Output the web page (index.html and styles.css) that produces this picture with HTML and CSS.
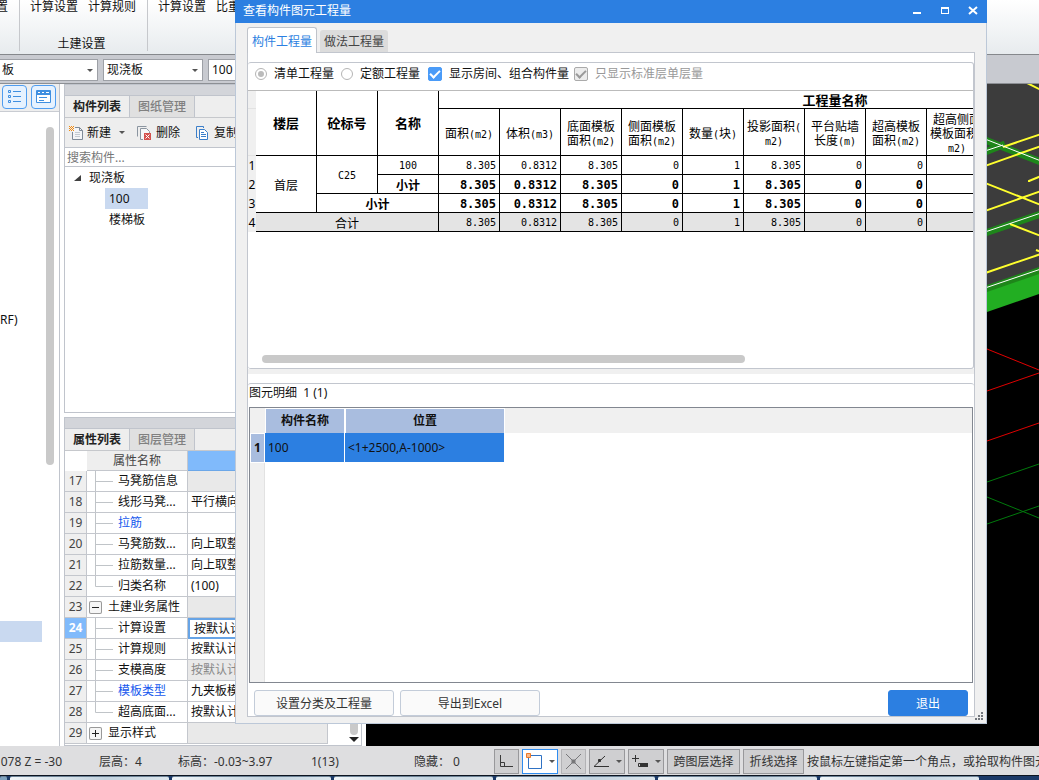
FILE: index.html
```html
<!DOCTYPE html>
<html lang="zh-CN">
<head>
<meta charset="utf-8">
<title>查看构件图元工程量</title>
<link rel="stylesheet" href="styles.css">
</head>
<body>
<div class="app">
  <header class="ribbon">
    <section class="rgroup rgroup-first"><div class="ritems"><button>设置</button></div></section>
    <section class="rgroup rgroup-civil">
      <div class="ritems"><button>计算设置</button><button>计算规则</button></div>
      <h2>土建设置</h2>
    </section>
    <section class="rgroup rgroup-last"><div class="ritems"><button>计算设置</button><button>比重设置</button></div></section>
  </header>

  <div class="combos">
    <label class="combo"><select aria-label="构件类别"><option>板</option></select></label>
    <label class="combo"><select aria-label="构件类型"><option>现浇板</option></select></label>
    <label class="combo"><select aria-label="构件"><option>100</option></select></label>
  </div>

  <main class="work">
    <aside class="nav">
      <div class="navbar">
        <button class="navbtn" aria-label="列表视图"><svg width="15" height="16" viewBox="0 0 15 16" fill="none" stroke="#3f8fe0"><path d="M1.500 1.500h2v2h-2zM1.500 6.500h2v2h-2zM1.500 11.500h2v2h-2zM6 2.500h8M6 7.500h8M6 12.500h8"/></svg></button>
        <button class="navbtn" aria-label="窗口视图"><svg width="15" height="16" viewBox="0 0 15 16"><path d="M.5 1.500h14v12H.5z" fill="#fff" stroke="#3f8fe0"/><path d="M1 1h13v5H1z" fill="#3f8fe0"/><path d="M3 8.500h8M3 11.500h5" stroke="#3f8fe0"/><path d="M2 3.500h2M6 3.500h2M10 3.500h3" stroke="#fff"/></svg></button>
      </div>
      <div class="navbody">
        <div class="navlist"><span class="navtext">RF)</span><span class="navsel"></span></div>
        <div class="navscroll"></div>
      </div>
    </aside>

    <div class="docks">
      <section class="dock dock-list">
        <div class="strip"></div>
        <div class="tabs"><button class="on">构件列表</button><button>图纸管理</button></div>
        <div class="tools">
          <button><svg width="16" height="16" viewBox="0 0 16 16" fill="none"><path d="M7 2.500h4.500l3 3v9h-10V7" fill="#f4f5f7" stroke="#7f8b98"/><path d="M11.500 2.500v3h3" stroke="#7f8b98"/><path d="M7 7.500h5M7 9.500h5M7 11.500h5" stroke="#c3cad1"/><path d="M1 1h1v1H1zM3 1h1v1H3zM5 1h1v1H5zM2 2h1v1H2zM4 2h1v1H4zM1 3h1v1H1zM3 3h1v1H3zM5 3h1v1H5zM2 4h1v1H2zM4 4h1v1H4zM1 5h1v1H1zM3 5h1v1H3zM5 5h1v1H5z" fill="#f28a10"/></svg><span>新建</span></button>
          <i class="caret"></i>
          <button class="tool-del"><svg width="16" height="16" viewBox="0 0 16 16" fill="none"><path d="M.5 11.500v-10h9" stroke="#8b95a0"/><path d="M6 14.500H3.500v-11h6l3 3V8" fill="#f6f7f8" stroke="#8b95a0"/><path d="M7 8h7v7H7z" fill="#d4504c"/><path d="m8.500 9.500 4 4m0-4-4 4" stroke="#fff"/></svg><span>删除</span></button>
          <button class="tool-copy"><svg width="16" height="16" viewBox="0 0 16 16" fill="none" stroke="#3b7ec9"><path d="M3 12.500H1.500v-11h7V3"/><path d="M4.500 4.500h5l3 3v7h-8z" fill="#fff"/><path d="M6 7.500h3M6 9.500h5M6 11.500h5"/></svg><span>复制</span></button>
        </div>
        <input class="search" type="text" placeholder="搜索构件..." aria-label="搜索构件">
        <ul class="tree">
          <li class="root"><svg width="8" height="8" viewBox="0 0 8 8"><path d="M7 1v6H0z" fill="#404040"/></svg>现浇板</li>
          <li class="leaf"><span class="picked">100</span></li>
          <li class="leaf"><span>楼梯板</span></li>
        </ul>
      </section>

      <section class="dock dock-props">
        <div class="strip"></div>
        <div class="tabs"><button class="on">属性列表</button><button>图层管理</button></div>
        <div class="propwrap">
        <table class="props">
          <colgroup><col class="pc-no"><col class="pc-name"><col class="pc-val"></colgroup>
          <thead><tr><th class="corner"></th><th>属性名称</th><th class="vhead"></th></tr></thead>
          <tbody>
            <tr><th>17</th><td><div class="nm"><svg class="br" viewBox="0 0 26 20"><path d="M8.500 0v20M8.500 10.500H26"/></svg>马凳筋信息</div></td><td class="off"></td></tr>
            <tr><th>18</th><td><div class="nm"><svg class="br" viewBox="0 0 26 20"><path d="M8.500 0v20M8.500 10.500H26"/></svg>线形马凳...</div></td><td>平行横向</td></tr>
            <tr><th>19</th><td><div class="nm link"><svg class="br" viewBox="0 0 26 20"><path d="M8.500 0v20M8.500 10.500H26"/></svg>拉筋</div></td><td></td></tr>
            <tr><th>20</th><td><div class="nm"><svg class="br" viewBox="0 0 26 20"><path d="M8.500 0v20M8.500 10.500H26"/></svg>马凳筋数...</div></td><td>向上取整+1</td></tr>
            <tr><th>21</th><td><div class="nm"><svg class="br" viewBox="0 0 26 20"><path d="M8.500 0v20M8.500 10.500H26"/></svg>拉筋数量...</div></td><td>向上取整+1</td></tr>
            <tr><th>22</th><td><div class="nm"><svg class="br" viewBox="0 0 26 20"><path d="M8.500 0v10.500H26"/></svg>归类名称</div></td><td>(100)</td></tr>
            <tr><th>23</th><td><div class="nm grp"><button class="exp" aria-label="折叠"><svg width="13" height="13" viewBox="0 0 13 13"><path d="M3 6.500h7" stroke="#222"/></svg></button>土建业务属性</div></td><td class="off"></td></tr>
            <tr class="cur"><th>24</th><td><div class="nm"><svg class="br" viewBox="0 0 26 20"><path d="M8.500 0v20M8.500 10.500H26"/></svg>计算设置</div></td><td class="edit">按默认计算设置</td></tr>
            <tr><th>25</th><td><div class="nm"><svg class="br" viewBox="0 0 26 20"><path d="M8.500 0v20M8.500 10.500H26"/></svg>计算规则</div></td><td>按默认计算规则</td></tr>
            <tr><th>26</th><td><div class="nm"><svg class="br" viewBox="0 0 26 20"><path d="M8.500 0v20M8.500 10.500H26"/></svg>支模高度</div></td><td class="off">按默认计算</td></tr>
            <tr><th>27</th><td><div class="nm link"><svg class="br" viewBox="0 0 26 20"><path d="M8.500 0v20M8.500 10.500H26"/></svg>模板类型</div></td><td>九夹板模板</td></tr>
            <tr><th>28</th><td><div class="nm"><svg class="br" viewBox="0 0 26 20"><path d="M8.500 0v10.500H26"/></svg>超高底面...</div></td><td>按默认计算</td></tr>
            <tr><th>29</th><td><div class="nm grp"><button class="exp" aria-label="展开"><svg width="13" height="13" viewBox="0 0 13 13"><path d="M3 6.500h7M6.500 3v7" stroke="#222"/></svg></button>显示样式</div></td><td class="off"></td></tr>
          </tbody>
        </table>
        <div class="pscroll"><span class="pthumb"></span><i class="caret dark"></i></div>
        </div>
      </section>
    </div>

    <section class="canvas">
      <svg width="52" height="460" viewBox="0 0 52 460" fill="none">
        <path d="M0 0h52v186L0 204z" fill="#3c3c3c"/>
        <path d="M0 204 52 185v25L0 228z" fill="#22ae22"/>
        <g stroke="#1e861a" stroke-width="7"><path d="M-2 56 54 78M-2 68 18 60M-2 149 54 130"/></g>
        <path d="M0 201 52 183v7L0 208z" fill="#1e861a"/>
        <g stroke="#ffff2e" stroke-width="2"><path d="M36-3 54 6M16 63 54 50M-2 82 54 62M42 98v-1l12-5M-2 99 54 121M-2 127 54 107M23 140l31 12M49 166l5 2M-2 189 54 170"/></g>
        <g stroke="#fff"><path d="M-2 55 54 77M-2 67 16 61M-2 148 54 129M-2 204 54 185"/></g>
        <g stroke="#e00000"><path d="M0 265 52 286M0 307 52 289M0 357 52 339"/></g>
        <g stroke="#007a0c"><path d="M0 398 52 380M0 413 52 434M0 440 52 422"/></g>
      </svg>
    </section>
  </main>

  <footer class="status">
    <span class="s-xy">X = 1078 Z = -30</span>
    <span class="s-h">层高：4</span>
    <span class="s-e">标高：-0.03~3.97</span>
    <span class="s-n">1(13)</span>
    <span class="s-hide">隐藏： 0</span>
    <div class="sbtns">
      <button class="sq" aria-label="正交"><svg width="15" height="15" viewBox="0 0 15 15" fill="none" stroke="#3a3a3a"><path d="M1.500 1v11.500H14M1.500 8.500h4v4"/></svg></button>
      <button class="dd active" aria-label="矩形"><svg width="18" height="17" viewBox="0 0 18 17" fill="none"><path d="M3.500 2.500h13v13h-13z" stroke="#2f72c4"/><path d="M1.500.5h4v4h-4z" fill="#f7b98a" stroke="#ee7a2b"/></svg><i class="caret"></i></button>
      <button class="sq dim" aria-label="交点"><svg width="17" height="17" viewBox="0 0 17 17" fill="none" stroke="#77777a"><path d="m1 1 15 15M16 1 1 16"/><path d="M7 7h3v3H7z" fill="#777"/></svg></button>
      <button class="dd" aria-label="角度"><svg width="18" height="17" viewBox="0 0 18 17" fill="none" stroke="#333"><path d="M17 13.500H2L13 3"/><path d="M6.500 6.500h2v2h-2z" fill="#333"/></svg><i class="caret"></i></button>
      <button class="dd" aria-label="偏移"><svg width="18" height="17" viewBox="0 0 18 17" fill="none" stroke="#333"><path d="M1 5.500h7M4.500 2v7"/><path d="M7.500 10.500h9v3h-9z"/><path d="M9 10h8v4H9z" fill="#333" stroke="none"/></svg><i class="caret"></i></button>
      <button class="tx tx-cross">跨图层选择</button>
      <button class="tx tx-poly">折线选择</button>
    </div>
    <span class="s-tip">按鼠标左键指定第一个角点，或拾取构件图元</span>
  </footer>
  <div class="taskbar"><i class="task-cut"></i><i></i><i></i><i></i><i></i><i></i><i></i></div>
</div>

<div class="dialog" role="dialog" aria-labelledby="dlg-title">
  <div class="titlebar">
    <h1 id="dlg-title">查看构件图元工程量</h1>
    <div class="winbtns">
      <button aria-label="最小化"><svg width="10" height="10" viewBox="0 0 10 10"><path d="M1 7h8v2H1z" fill="#fff"/></svg></button>
      <button aria-label="最大化"><svg width="10" height="10" viewBox="0 0 10 10"><path d="M1 2h8v7H1zM2 4v4h6V4z" fill="#fff" fill-rule="evenodd"/></svg></button>
      <button aria-label="关闭"><svg width="10" height="10" viewBox="0 0 10 10"><path d="m1 2 8 7M9 2 1 9" stroke="#fff" stroke-width="2"/></svg></button>
    </div>
  </div>
  <div class="dbody">
    <div class="dtabs"><button class="on">构件工程量</button><button>做法工程量</button></div>
    <div class="page">
      <div class="upper">
        <div class="opts">
          <input type="radio" name="kind" id="k1" checked disabled><label class="lb1" for="k1">清单工程量</label>
          <input type="radio" name="kind" id="k2"><label class="lb2" for="k2">定额工程量</label>
          <input type="checkbox" id="c1" checked><label class="lb3" for="c1">显示房间、组合构件量</label>
          <input type="checkbox" id="c2" checked disabled><label class="lb4" for="c2">只显示标准层单层量</label>
        </div>
        <div class="qtywrap">
          <table class="qty">
            <colgroup><col class="qn"><col span="16" class="qc"></colgroup>
            <thead>
              <tr class="h1"><th class="no"></th><th rowspan="2">楼层</th><th rowspan="2">砼标号</th><th rowspan="2">名称</th><th colspan="13">工程量名称</th></tr>
              <tr class="h2"><th class="no"></th><th>面积<span>(m2)</span></th><th>体积<span>(m3)</span></th><th>底面模板<br>面积<span>(m2)</span></th><th>侧面模板<br>面积<span>(m2)</span></th><th>数量<span>(</span>块<span>)</span></th><th>投影面积<span>(<br>m2)</span></th><th>平台贴墙<br>长度<span>(m)</span></th><th>超高模板<br>面积<span>(m2)</span></th><th>超高侧面<br>模板面积<span>(<br>m2)</span></th><th></th><th></th><th></th><th></th></tr>
            </thead>
            <tbody>
              <tr><th class="no">1</th><td class="c cn" rowspan="3">首层</td><td class="c" rowspan="2">C25</td><td class="c">100</td><td>8.305</td><td>0.8312</td><td>8.305</td><td>0</td><td>1</td><td>8.305</td><td>0</td><td>0</td><td></td><td></td><td></td><td></td><td></td></tr>
              <tr class="b"><th class="no">2</th><td class="c cn">小计</td><td>8.305</td><td>0.8312</td><td>8.305</td><td>0</td><td>1</td><td>8.305</td><td>0</td><td>0</td><td></td><td></td><td></td><td></td><td></td></tr>
              <tr class="b"><th class="no">3</th><td class="c cn" colspan="2">小计</td><td>8.305</td><td>0.8312</td><td>8.305</td><td>0</td><td>1</td><td>8.305</td><td>0</td><td>0</td><td></td><td></td><td></td><td></td><td></td></tr>
              <tr class="total"><th class="no">4</th><td class="c cn" colspan="3">合计</td><td>8.305</td><td>0.8312</td><td>8.305</td><td>0</td><td>1</td><td>8.305</td><td>0</td><td>0</td><td></td><td></td><td></td><td></td><td></td></tr>
            </tbody>
          </table>
        </div>
        <div class="hscroll"><span></span></div>
      </div>
      <div class="splitter"></div>
      <div class="lower">
        <h3>图元明细&nbsp; 1 (1)</h3>
        <div class="detailwrap">
          <table class="detail">
            <colgroup><col class="dn"><col class="d1"><col class="d2"><col></colgroup>
            <thead><tr><th class="gut"></th><th>构件名称</th><th>位置</th><th class="rest"></th></tr></thead>
            <tbody><tr><th>1</th><td>100</td><td>&lt;1+2500,A-1000&gt;</td><td class="rest"></td></tr></tbody>
          </table>
          <div class="gutter"></div>
        </div>
        <div class="actions">
          <button>设置分类及工程量</button><button>导出到Excel</button><button class="primary">退出</button>
        </div>
      </div>
    </div>
    <svg class="grip" width="8" height="8" viewBox="0 0 8 8"><path d="M6 0h2v2H6zM3 3h2v2H3zM6 3h2v2H6zM0 6h2v2H0zM3 6h2v2H3zM6 6h2v2H6z" fill="#73777d"/></svg>
  </div>
</div>
</body>
</html>
```

FILE: styles.css
```css
* { box-sizing: border-box; }
html, body { height: 100%; margin: 0; }
body {
  position: relative;
  overflow: hidden;
  font: 12px/16px "Noto Sans", "Noto Sans CJK SC", sans-serif;
  color: #111;
  background: #000;
}
button, input, select { font: inherit; color: inherit; margin: 0; }
button { border: 0; padding: 0; background: none; white-space: nowrap; }
h1, h2, h3 { margin: 0; font-size: 12px; font-weight: 400; }
svg { display: block; flex: none; }

.app { height: 100vh; display: flex; flex-direction: column; overflow: hidden; }
.caret {
  flex: none;
  width: 0;
  border: 3px solid transparent;
  border-top-color: #555;
  border-bottom: 0;
}
.caret.dark { border-width: 5px 5px 0; border-top-color: #222; }

/* Ribbon */
.ribbon {
  flex: none;
  height: 55px;
  display: flex;
  background: linear-gradient(#fff, #e7ebee);
  border-bottom: 1px solid #85888c;
}
.rgroup {
  display: flex;
  flex-direction: column;
  justify-content: space-between;
  align-items: center;
  margin-bottom: 3px;
  border-right: 1px solid #c6c8cc;
}
.rgroup-first { width: 20px; align-items: flex-end; padding-right: 11px; }
.rgroup-civil { width: 128px; padding-right: 1px; }
.rgroup-civil h2 { line-height: 14px; padding-right: 3px; }
.rgroup-last { border: 0; padding-left: 10px; }
.ritems { display: flex; gap: 10px; margin-top: -1px; }

/* Combo row */
.combos {
  flex: none;
  height: 29px;
  display: flex;
  gap: 5px;
  align-items: center;
  padding-top: 2px;
  background: #c8cad0;
  border-bottom: 1px solid #8c8f94;
}
.combo { position: relative; width: 100px; }
.combo:first-child { width: 98px; }
.combo::after {
  content: "";
  position: absolute;
  right: 5px;
  top: 10px;
  border: 3px solid transparent;
  border-top-color: #555;
  border-bottom: 0;
}
.combo select {
  display: block;
  appearance: none;
  width: 100%;
  height: 22px;
  padding: 0 3px;
  border: 1px solid #9da0a6;
  border-radius: 0;
  background: #fff;
}
.combo:first-child select { border-left: 0; padding-left: 2px; }

/* Work area */
.work { flex: 1; min-height: 0; display: flex; background: #fff; }
.nav { flex: none; width: 60px; display: flex; flex-direction: column; border-right: 1px solid #c0c4cc; }
.navbar { display: flex; gap: 4px; padding: 1px 2px 2px; background: #eee; border-bottom: 1px solid #c9ccd2; }
.navbtn {
  width: 25px;
  height: 24px;
  display: grid;
  place-items: center;
  border: 1px solid #4f9df0;
  border-radius: 4px;
  background: #e6f2ff;
}
.navbody { flex: 1; display: flex; justify-content: space-between; padding: 15px 5px 0 0; }
.navlist { display: flex; flex-direction: column; padding-top: 185px; }
.navsel { width: 42px; height: 21px; margin-top: 293px; background: #c9d9f0; }
.navscroll { width: 8px; height: 338px; border-radius: 4px; background: #c9c9c9; }

.docks { flex: none; width: 298px; margin-left: 4px; display: flex; flex-direction: column; gap: 4px; }
.dock { border: 1px solid #c0c4cc; display: flex; flex-direction: column; }
.dock-list { flex: 1; }
.strip { height: 11px; background: #d3d5da; border-bottom: 1px solid #c0c4cc; }
.tabs { height: 22px; display: flex; background: #eee; border-bottom: 1px solid #c6c8cc; }
.tabs button { width: 65px; color: #808080; background: #e0e0e0; border-right: 1px solid #c0c4cc; font-weight: 700; }
.tabs button:not(.on) { font-weight: 500; }
.tabs .on { color: #222; background: #eee; }
.tools { height: 30px; display: flex; align-items: center; padding-left: 3px; background: #eee; border-bottom: 1px solid #c0c4cc; }
.tools button { display: flex; align-items: center; gap: 3px; }
.tools .caret { margin-left: 8px; }
.tools .tool-del { margin-left: 12px; }
.tools .tool-copy { margin-left: 15px; }
.search { height: 19px; padding: 0 2px; border: 0; border-bottom: 1px solid #c0c4cc; background: #fff; outline: 0; }
.search::placeholder { color: #777; opacity: 1; }
.tree { list-style: none; margin: 0; padding: 0; }
.tree li { height: 21px; display: flex; align-items: center; }
.root { gap: 7px; padding-left: 9px; }
.leaf { padding-left: 40px; }
.leaf span { height: 21px; line-height: 21px; padding: 0 4px; }
.leaf .picked { width: 43px; background: #c9d9f0; }

.propwrap { display: flex; justify-content: space-between; padding-bottom: 1px; }
.props { width: 263px; table-layout: fixed; border-collapse: separate; border-spacing: 0; }
.pc-no { width: 22px; }
.pc-name { width: 101px; }
.pc-val { width: 140px; }
.props th, .props td { padding: 0; height: 21px; border-right: 1px solid #c4c7cd; border-bottom: 1px solid #c4c7cd; font-weight: 400; white-space: nowrap; overflow: hidden; line-height: 20px; }
.props td + td { padding-left: 3px; }
.props thead th { height: 20px; background: #eee; color: #444; line-height: 19px; }
.props thead .corner { background: #fff; border: 0; }
.props thead .vhead { background: #80bafb; border-color: #6ca7e8; }
.props tbody th { background: #efefef; color: #444; }
.props .off { background: #e9e9e9; color: #888; }
.props .cur th { background: #80bafb; color: #fff; font-weight: 700; }
.props .cur .edit { border: 2px solid #67a4e6; line-height: 17px; padding-left: 4px; }
.nm { display: flex; align-items: center; gap: 5px; height: 20px; }
.nm.link { color: #1558ee; }
.nm.grp { padding-left: 2px; gap: 6px; }
.br { width: 26px; height: 20px; fill: none; stroke: #c0c4c8; }
.exp { width: 13px; height: 13px; border-radius: 2px; box-shadow: 0 0 0 1px #999 inset; background: #f6f6f6; }
.pscroll { width: 15px; display: flex; flex-direction: column; justify-content: flex-end; align-items: center; gap: 2px; padding-bottom: 2px; }
.pthumb { width: 8px; height: 200px; border-radius: 4px; background: #c9c9c9; }

.canvas { flex: 1; display: flex; justify-content: flex-end; margin-left: 4px; background: #000; overflow: hidden; }

/* Status bar */
.status { flex: none; height: 29px; padding-top: 2px; display: flex; align-items: center; background: #dedee0; color: #333; white-space: nowrap; overflow: hidden; }
.status > span { flex: none; }
.s-xy { width: 62px; display: flex; justify-content: flex-end; }
.s-h { width: 79px; margin-left: 37px; }
.s-e { width: 133px; }
.s-n { width: 103px; }
.s-hide { width: 80px; }
.sbtns { flex: none; display: flex; gap: 3px; margin-right: 3px; }
.sbtns button { height: 25px; display: flex; align-items: center; justify-content: center; border: 1px solid #98989b; background: #cfcfd1; }
.sbtns .sq { width: 25px; }
.sbtns .dd { width: 36px; gap: 6px; }
.sbtns .active { background: #fff; border-color: #2e8cf0; }
.sbtns .dim { border-color: #b2b2b5; }
.tx-cross { width: 73px; }
.tx-poly { width: 61px; }
.taskbar { flex: none; height: 5px; display: flex; gap: 3px; border-top: 1px solid #0c1420; background: #1b3a68; }
.taskbar i { width: 159px; background: linear-gradient(90deg, #f0f5f8, #c3d3df 60%, #dce6ed); border-top: 1px solid #6c8296; border-radius: 2px 2px 0 0; }
.taskbar .task-cut { width: 7px; background: #7fa3bf; }

/* Dialog */
.dialog {
  position: absolute;
  top: 0;
  right: 52px;
  bottom: 56px;
  left: 235px;
  display: flex;
  flex-direction: column;
  background: #f0f0f0;
}
.titlebar { flex: none; height: 23px; display: flex; justify-content: space-between; align-items: center; padding: 0 9px 2px 8px; background: #2c7fe1; color: #fff; }
.winbtns { display: flex; gap: 18px; padding-bottom: 2px; }
.dbody { position: relative; flex: 1; min-height: 0; display: flex; flex-direction: column; padding: 4px 11px 6px; border: 1px solid #bcc8d8; border-top: 0; }
.dtabs { flex: none; height: 26px; display: flex; align-items: flex-end; gap: 3px; position: relative; margin-bottom: -1px; }
.dtabs button { width: 68px; height: 22px; padding-top: 2px; background: #dcdcdc; color: #444; border-radius: 3px 3px 0 0; margin-bottom: 1px; }
.dtabs .on { width: 70px; height: 26px; margin-bottom: 0; background: #fff; color: #2c7fe1; border: 1px solid #bfc3ca; border-bottom: 0; }
.page { flex: 1; min-height: 0; display: flex; flex-direction: column; padding-top: 9px; border: 1px solid #c2c6ce; background: #fff; }
.upper { flex: none; display: flex; flex-direction: column; min-height: 307px; border: 1px solid #c2c6ce; border-left: 0; border-radius: 3px; }
.opts { height: 28px; padding: 0 0 5px 7px; display: flex; align-items: center; border-bottom: 1px solid #bbb; white-space: nowrap; }
.opts label { flex: none; padding-left: 7px; }
.opts input { appearance: none; flex: none; display: grid; place-items: center; width: 12px; height: 12px; border: 1px solid #b5b5b5; border-radius: 50%; background: #fff; }
.opts input[type="radio"]:checked::before { content: ""; width: 6px; height: 6px; border-radius: 50%; background: #bbb; }
.opts input[type="checkbox"] { width: 14px; height: 14px; border-radius: 2px; border-color: #4a9bf8; background: #4a9bf8; }
.opts input[type="checkbox"]::before { content: ""; width: 8px; height: 4px; margin-top: -2px; border: solid #fff; border-width: 0 0 2px 2px; transform: rotate(-45deg); }
.opts input[type="checkbox"]:disabled { background: #ececec; border-color: #aaa; }
.opts input[type="checkbox"]:disabled::before { border-color: #999; }
.lb1 { width: 74px; }
.lb2 { width: 75px; }
.lb3 { width: 132px; }
.lb4 { color: #999; }

.qtywrap { flex: 1; overflow: hidden; }
.qty { width: 984px; table-layout: fixed; border-collapse: separate; border-spacing: 0; background: #fff; color: #000; }
.qn { width: 8px; }
.qc { width: 61px; }
.qty th, .qty td { padding: 2px 3px 0 0; border: solid #000; border-width: 0 1px 1px 0; font: 10px/14px "DejaVu Sans Mono", "Noto Sans CJK SC", monospace; text-align: right; white-space: nowrap; overflow: hidden; }
.qty td { height: 19px; }
.qty thead th { padding: 0; text-align: center; font: 700 13px/16px "Noto Sans CJK SC", sans-serif; }
.qty .h1 th { height: 18px; }
.qty .h2 th { height: 47px; padding-top: 1px; font: 12px/14px "Noto Sans CJK SC", sans-serif; }
.qty .h2 span { font: 10px/10px "DejaVu Sans Mono", monospace; }
.qty .b td { font-weight: 700; font-size: 12px; }
.qty .c { padding: 2px 0 0; text-align: center; }
.qty .cn { font-family: "Noto Sans CJK SC", sans-serif; font-size: 12px; }
.qty .total td { background: #e4e4e4; }
.qty .no { padding: 0; border: 0; background: #f0f0f0; text-align: center; font: 12px/16px "Noto Sans", sans-serif; }
.qty thead .no { border-bottom: 1px solid #e2e2e2; }
.hscroll { padding: 0 0 5px 14px; }
.hscroll span { display: block; width: 68%; height: 8px; border-radius: 4px; background: #c9c9c9; }
.splitter { flex: none; height: 5px; background: #f0f0f0; }
.lower { flex: 1; min-height: 0; margin-top: 9px; display: flex; flex-direction: column; border-top: 1px solid #c2c6ce; border-radius: 3px; }
.lower h3 { flex: none; padding: 1px 0 6px 1px; }
.detailwrap { flex: 1; min-height: 0; display: flex; flex-direction: column; margin: 0 1px; border: 1px solid #828790; }
.detail { width: 100%; table-layout: fixed; border-collapse: separate; border-spacing: 0; }
.dn { width: 15px; }
.d1 { width: 80px; }
.d2 { width: 160px; }
.detail th, .detail td { border: 1px solid #fff; border-width: 1px 1px 0; background: #a9bddf; padding: 0; height: 25px; }
.detail td { height: 30px; background: #2c7fe1; text-align: left; padding-left: 3px; border-width: 0 1px 1px 0; }
.detail tbody th { border-width: 1px; }
.detail .gut, .detail .rest { background: #f0f0f0; border-color: #f0f0f0; }
.detail td.rest { background: #fff; border-color: #fff; }
.gutter { flex: 1; width: 15px; background: #f0f0f0; border-right: 1px solid #e2e2e2; }
.actions { flex: none; display: flex; gap: 6px; padding: 7px 6px 0; }
.actions button { width: 140px; height: 26px; padding-top: 1px; border: 1px solid #c3ccd9; border-radius: 3px; background: #fafafa; color: #333; }
.actions .primary { width: 80px; margin-left: auto; background: #2c7fe1; border-color: #2c7fe1; color: #fff; }
.grip { position: absolute; right: 3px; bottom: 3px; }
```
